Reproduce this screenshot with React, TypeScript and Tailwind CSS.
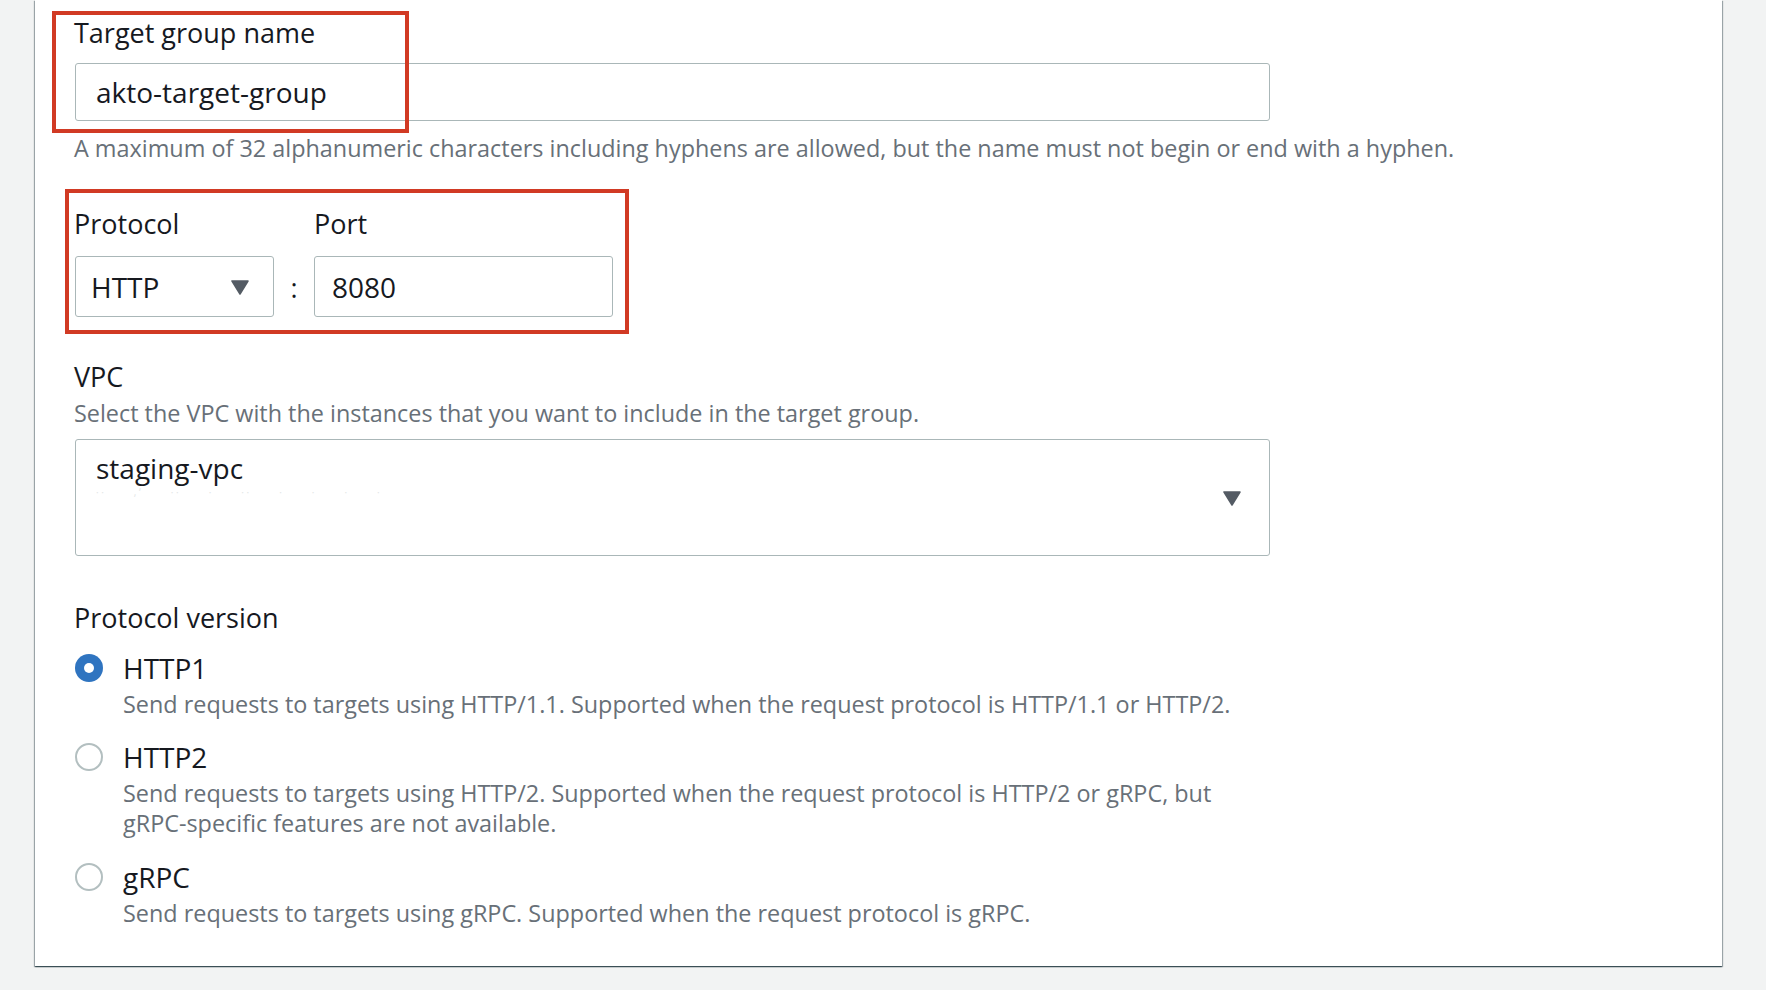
import React from 'react';

const font = { fontFamily: '"Open Sans", "Noto Sans", Arial, sans-serif' };

function Arrow() {
  return (
    <svg width="20" height="16" viewBox="0 0 20 16" className="shrink-0">
      <path d="M2 2 H18 L10 15 Z" fill="#545b64" stroke="#545b64" strokeWidth="1.5" strokeLinejoin="round" />
    </svg>
  );
}

function Radio({ checked }: { checked?: boolean }) {
  if (checked) {
    return (
      <span className="block w-[28px] h-[28px] rounded-full bg-[#2f74c0] flex items-center justify-center shrink-0">
        <span className="block w-[10px] h-[10px] rounded-full bg-white" />
      </span>
    );
  }
  return <span className="block w-[28px] h-[28px] rounded-full border-2 border-[#b3bfc0] bg-white shrink-0" />;
}

const versions = [
  { name: 'HTTP1', checked: true, desc: ['Send requests to targets using HTTP/1.1. Supported when the request protocol is HTTP/1.1 or HTTP/2.'], mt: 'mt-[22px]' },
  {
    name: 'HTTP2',
    desc: [
      'Send requests to targets using HTTP/2. Supported when the request protocol is HTTP/2 or gRPC, but',
      'gRPC-specific features are not available.',
    ],
    mt: 'mt-[24px]',
  },
  { name: 'gRPC', desc: ['Send requests to targets using gRPC. Supported when the request protocol is gRPC.'], mt: 'mt-[25px]' },
];

export default function App() {
  return (
    <div className="w-[1766px] h-[990px] bg-[#f2f3f3] overflow-hidden relative" style={font}>
      <div className="ml-[35px] w-[1687px] h-[966px] bg-white shadow-[0_1px_1px_0_rgba(0,28,36,0.5),1px_1px_1px_0_rgba(0,28,36,0.3),-1px_1px_1px_0_rgba(0,28,36,0.3)] pl-[40px] pt-[19px] text-[#16191f]">
        <div className="-ml-[1px] text-[27px] leading-[28px]">Target group name</div>
        <div className="mt-4 w-[1195px] h-[58px] border border-[#aab7b8] rounded-[3px] flex items-center pl-[20px] text-[28px]">
          akto-target-group
        </div>
        <div className="-ml-[1px] mt-[13px] text-[23.4px] leading-[28px] text-[#687078]">
          A maximum of 32 alphanumeric characters including hyphens are allowed, but the name must not begin or end with a hyphen.
        </div>

        <div className="mt-[48px] flex">
          <div>
            <div className="-ml-[1px] text-[27px] leading-[28px]">Protocol</div>
            <div className="mt-[18px] w-[199px] h-[61px] border border-[#aab7b8] rounded-[3px] flex items-center justify-between pl-[15px] pr-[23px] text-[28px]">
              <span>HTTP</span>
              <Arrow />
            </div>
          </div>
          <div className="w-[40px] flex items-end justify-center pb-[9px] text-[27px]">:</div>
          <div>
            <div className="text-[27px] leading-[28px]">Port</div>
            <div className="mt-[18px] w-[299px] h-[61px] border border-[#aab7b8] rounded-[3px] flex items-center pl-[17px] text-[28px]">
              8080
            </div>
          </div>
        </div>

        <div className="-ml-[1px] mt-[46px] text-[27px] leading-[28px]">VPC</div>
        <div className="-ml-[1px] mt-[8px] text-[23.4px] leading-[28px] text-[#687078]">
          Select the VPC with the instances that you want to include in the target group.
        </div>
        <div className="mt-[12px] w-[1195px] h-[117px] border border-[#aab7b8] rounded-[3px] flex justify-between pl-[20px] pr-[27px]">
          <div className="pt-[14px]">
            <div className="text-[28px] leading-[28px]">staging-vpc</div>
            <div className="mt-[6px] flex gap-[30px] text-[#e3e6e6] text-[10px] leading-[8px]">
              <span>· ·</span><span>, ʹ</span><span>· ·</span><span>·</span><span>· ·</span><span>·</span><span>·</span><span>·</span><span>·</span>
            </div>
          </div>
          <div className="flex items-center">
            <Arrow />
          </div>
        </div>

        <div className="-ml-[1px] mt-[48px] text-[27px] leading-[28px]">Protocol version</div>
        {versions.map((v) => (
          <div key={v.name} className={v.mt}>
            <div className="flex items-center">
              <span><Radio checked={v.checked} /></span>
              <span className="ml-[20px] text-[28px] leading-[28px]">{v.name}</span>
            </div>
            <div className="mt-[7px] pl-[48px] text-[23.4px] leading-[30px] text-[#687078]">
              {v.desc.map((d) => (
                <div key={d}>{d}</div>
              ))}
            </div>
          </div>
        ))}
      </div>

      {/* annotation boxes */}
      <div className="absolute left-[52px] top-[11px] w-[357px] h-[122px] border-[4px] border-[#d13a24]" />
      <div className="absolute left-[65px] top-[189px] w-[564px] h-[145px] border-[4px] border-[#d13a24]" />
    </div>
  );
}
